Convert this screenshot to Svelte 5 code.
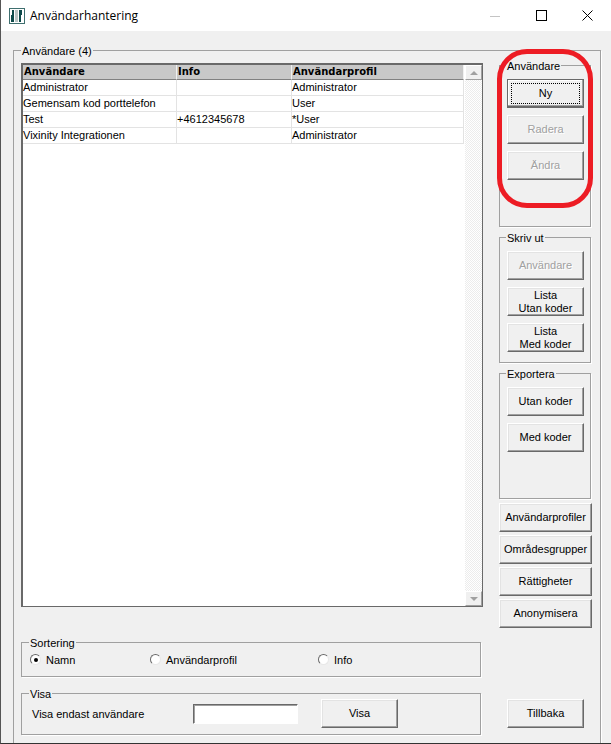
<script>
  const rows = [
    { name: 'Administrator', info: '', profile: 'Administrator' },
    { name: 'Gemensam kod porttelefon', info: '', profile: 'User' },
    { name: 'Test', info: '+4612345678', profile: '*User' },
    { name: 'Vixinity Integrationen', info: '', profile: 'Administrator' }
  ];
  const side = ['Användarprofiler', 'Områdesgrupper', 'Rättigheter', 'Anonymisera'];
</script>

<div class="window">
  <header class="titlebar">
    <svg class="appicon" viewBox="0 0 16 16" width="16" height="16">
      <rect x="0.5" y="0.5" width="15" height="15" fill="#fff" stroke="#3f6f6f"/>
      <path d="M2 14V7h1V2h2v12z" fill="#0f4a4a"/>
      <rect x="6" y="2" width="3" height="12" fill="#b9c4c4"/>
      <path d="M10 14V2h3v5h-1v7z" fill="#0f4a4a"/>
    </svg>
    <span class="title">Användarhantering</span>
    <div class="controls">
      <svg width="46" height="16" viewBox="0 0 46 16"><path d="M0 8.5h10" stroke="#c4c4c4"/></svg>
      <svg width="46" height="16" viewBox="0 0 46 16"><rect x="0.5" y="2.5" width="10" height="10" fill="none" stroke="#000"/></svg>
      <svg width="11" height="16" viewBox="0 0 11 16"><path d="M0.5 2.5l10 10M10.5 2.5l-10 10" stroke="#000" fill="none"/></svg>
    </div>
  </header>

  <main class="content">
    <fieldset class="group outer">
      <legend>Användare (4)</legend>
      <div class="columns">
        <div class="left">
          <div class="list">
            <div class="tablewrap">
              <table>
                <thead>
                  <tr><th>Användare</th><th>Info</th><th>Användarprofil</th></tr>
                </thead>
                <tbody>
                  {#each rows as r}
                    <tr><td>{r.name}</td><td>{r.info}</td><td>{r.profile}</td></tr>
                  {/each}
                </tbody>
              </table>
            </div>
            <div class="scrollbar">
              <div class="sbtn"><span class="arrow up"></span></div>
              <div class="sbtn"><span class="arrow down"></span></div>
            </div>
          </div>

          <fieldset class="group sort">
            <legend>Sortering</legend>
            <div class="radios">
              <label class="radio"><span class="dot on"></span>Namn</label>
              <label class="radio"><span class="dot"></span>Användarprofil</label>
              <label class="radio"><span class="dot"></span>Info</label>
            </div>
          </fieldset>

          <fieldset class="group show">
            <legend>Visa</legend>
            <div class="showrow">
              <span class="showlabel">Visa endast användare</span>
              <input class="field" type="text" />
              <button class="btn">Visa</button>
            </div>
          </fieldset>
        </div>

        <div class="right">
          <fieldset class="group box g1">
            <legend>Användare</legend>
            <button class="btn default"><span class="focus"></span>Ny</button>
            <button class="btn" disabled>Radera</button>
            <button class="btn" disabled>Ändra</button>
          </fieldset>
          <fieldset class="group box">
            <legend>Skriv ut</legend>
            <button class="btn" disabled>Användare</button>
            <button class="btn">Lista<br />Utan koder</button>
            <button class="btn">Lista<br />Med koder</button>
          </fieldset>
          <fieldset class="group box">
            <legend>Exportera</legend>
            <button class="btn">Utan koder</button>
            <button class="btn">Med koder</button>
          </fieldset>
          <div class="sidebtns">
            {#each side as s}
              <button class="btn wide">{s}</button>
            {/each}
          </div>
          <button class="btn back">Tillbaka</button>
        </div>
      </div>
    </fieldset>
  </main>
  <div class="highlight"></div>
</div>

<style>
  :global(body) { margin: 0; }
  .window {
    position: relative;
    width: 611px;
    height: 744px;
    box-sizing: border-box;
    overflow: hidden;
    background: #f0f0f0;
    border-left: 1px solid #555;
    border-bottom: 1px solid #333;
    font-family: "Liberation Sans", Arial, sans-serif;
    font-size: 11px;
    color: #000;
  }
  .titlebar {
    height: 31px;
    background: #fff;
    display: flex;
    align-items: center;
    padding-left: 8px;
  }
  .appicon { flex: none; }
  .title {
    margin-left: 5px;
    font-family: "Open Sans", sans-serif;
    font-size: 12px;
  }
  .controls {
    margin-left: auto;
    margin-right: 18px;
    display: flex;
    align-items: center;
  }
  .controls svg { display: block; }
  .content { padding: 13px 10px 0 12px; }
  .group {
    margin: 0;
    padding: 0;
    min-width: 0;
    box-sizing: border-box;
    border: 1px solid #a0a0a0;
    box-shadow: 1px 1px 0 #fff;
  }
  .group legend {
    margin-left: 7px;
    padding: 1px 1px 0;
    line-height: 12px;
    font-size: 11px;
  }
  .outer { height: 760px; padding: 2px 7px 0 7px; width: 588px; }
  .outer > legend { margin-left: 0; }
  .columns { display: flex; gap: 16px; }
  .left { width: 462px; padding-top: 4px; }
  .right { width: 93px; display: flex; flex-direction: column; gap: 4px; }
  .list {
    height: 544px;
    box-sizing: border-box;
    background: #fff;
    border: 1px solid #696969;
    border-top-width: 2px;
    border-left-width: 2px;
    display: flex;
  }
  .tablewrap { flex: 1; }
  table {
    width: 441px;
    border-collapse: separate;
    border-spacing: 0;
    table-layout: fixed;
  }
  th:nth-child(1), td:nth-child(1) { width: 152px; }
  th:nth-child(2), td:nth-child(2) { width: 113px; }
  th {
    height: 14px;
    padding: 0 0 0 1px;
    box-sizing: content-box;
    background: #c8c8c8;
    border-bottom: 1px solid #808080;
    border-right: 1px solid #f0f0f0;
    text-align: left;
    font-family: "DejaVu Sans", sans-serif;
    font-size: 10px;
    font-weight: bold;
    line-height: 14px;
  }
  td {
    height: 15px;
    padding: 0;
    border-bottom: 1px solid #e3e3e3;
    border-right: 1px solid #e3e3e3;
    line-height: 15px;
    white-space: nowrap;
    color: #000;
  }
  .scrollbar {
    width: 17px;
    flex: none;
    display: flex;
    flex-direction: column;
    justify-content: space-between;
    background: repeating-conic-gradient(#fff 0 25%, #ececec 0 50%) 0 0 / 2px 2px;
  }
  .sbtn {
    height: 15px;
    box-sizing: border-box;
    background: #f0f0f0;
    border-top: 1px solid #fff;
    border-left: 1px solid #fff;
    border-right: 1px solid #a0a0a0;
    border-bottom: 1px solid #a0a0a0;
    display: flex;
    align-items: center;
    justify-content: center;
  }
  .arrow { width: 0; height: 0; border-left: 4px solid transparent; border-right: 4px solid transparent; }
  .arrow.up { border-bottom: 4px solid #a0a0a0; }
  .arrow.down { border-top: 4px solid #a0a0a0; }

  .sort { width: 460px; height: 41px; margin-top: 29px; }
  .radios {
    display: grid;
    grid-template-columns: 120px 168px 1fr;
    padding: 4px 0 0 8px;
  }
  .radio { display: flex; align-items: center; height: 13px; gap: 5px; }
  .dot {
    width: 9px;
    height: 9px;
    border-radius: 50%;
    background: #fff;
    border: 1px solid;
    border-color: #696969 #e8e8e8 #e8e8e8 #696969;
    position: relative;
    flex: none;
  }
  .dot.on::after {
    content: "";
    position: absolute;
    left: 2.5px;
    top: 2.5px;
    width: 4px;
    height: 4px;
    border-radius: 50%;
    background: #000;
  }
  .show { width: 460px; height: 48px; margin-top: 10px; }
  .showrow { display: flex; align-items: center; margin-top: -1px; padding-left: 10px; }
  .showlabel { width: 161px; }
  .field {
    width: 105px;
    height: 20px;
    margin: 0 23px 0 0;
    padding: 0;
    box-sizing: border-box;
    background: #fff;
    border: 1px solid;
    border-color: #696969 #fff #fff #696969;
    box-shadow: inset 1px 1px 0 #a0a0a0;
  }
  .btn {
    position: relative;
    width: 77px;
    height: 29px;
    padding: 0;
    display: block;
    box-sizing: border-box;
    background: #f0f0f0;
    border: 1px solid;
    border-color: #fff #696969 #696969 #fff;
    border-radius: 0;
    box-shadow: inset -1px -1px 0 #a0a0a0, inset 1px 1px 0 #e3e3e3;
    font: inherit;
    line-height: 13px;
    color: #000;
    flex: none;
  }
  .btn:disabled { color: #a0a0a0; text-shadow: 1px 1px 0 #fff; }
  .btn.default {
    border-color: #696969;
    border-width: 1px 1px 2px 1px;
    box-shadow: inset -1px -1px 0 #a0a0a0, inset 1px 1px 0 #fff;
  }
  .focus { position: absolute; inset: 3px 3px 2px 3px; border: 1px dotted #000; }
  .box {
    height: 132px;
    padding: 7px 7px 0 7px;
    width: 92px;
    display: flex;
    flex-direction: column;
    gap: 7px;
  }
  .box legend { margin-left: -1px; }
  .g1 { height: 168px; }
  .sidebtns { display: flex; flex-direction: column; gap: 3px; }
  .wide { width: 93px; }
  .back { margin: 67px 0 0 8px; }
  .highlight {
    position: absolute;
    left: 496px;
    top: 49px;
    width: 96px;
    height: 159px;
    box-sizing: border-box;
    border: 5px solid #ed1c24;
    border-radius: 30px;
    pointer-events: none;
  }
</style>
